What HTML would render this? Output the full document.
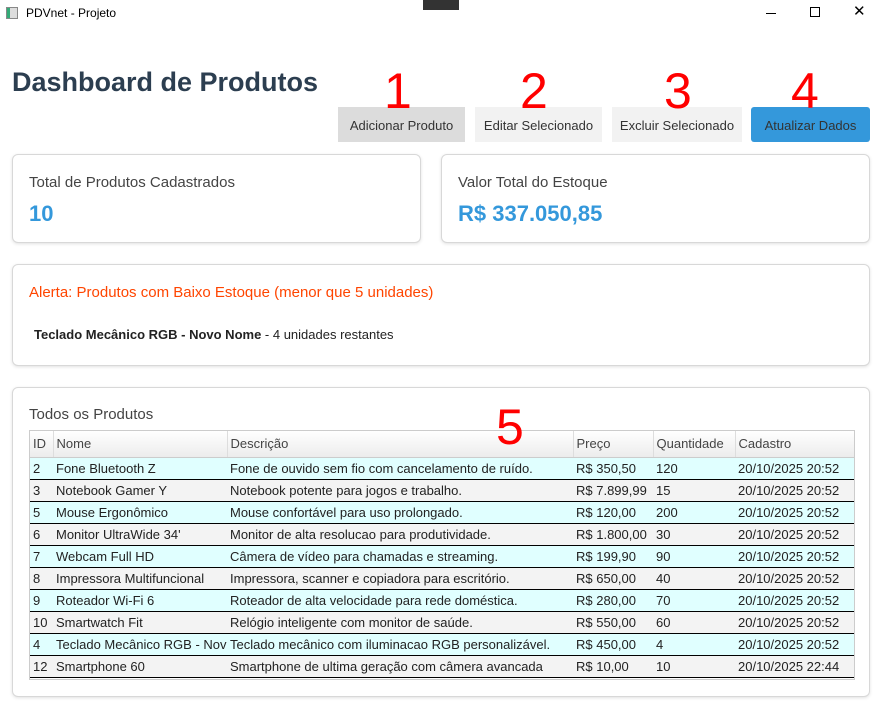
<!DOCTYPE html>
<html><head><meta charset="utf-8"><style>
*{box-sizing:border-box;margin:0;padding:0}
body{width:882px;height:709px;background:#fff;font-family:"Liberation Sans",sans-serif;position:relative;overflow:hidden;color:#222}
.abs{position:absolute}
.card{position:absolute;border:1px solid #d8d8d8;border-radius:6px;background:#fff;box-shadow:0 1px 3px rgba(0,0,0,.12)}
.btn{position:absolute;top:107px;height:35px;font-size:13px;line-height:37px;text-align:center;color:#333}
.num{position:absolute;color:#f00;font-size:50px;font-family:"Liberation Sans",sans-serif;line-height:50px;z-index:5}
table{border-collapse:collapse;font-size:13px;table-layout:fixed}
td,th{padding:0 3px;white-space:nowrap;overflow:hidden;text-align:left;font-weight:normal;height:22px}
th{height:26px;background:linear-gradient(#fff,#ececec);color:#444;border-right:1px solid #ddd;border-bottom:1px solid #ccc}
tr.r td{border-bottom:1px solid #000}
tr.c td{background:#e0ffff}
tr.g td{background:#f3f3f3}
</style></head><body>
<div class="abs" style="left:6px;top:7px;width:12px;height:12px;background:linear-gradient(90deg,#3a7 0 30%,#ddd 30%);border:1px solid #888"></div>
<div class="abs" style="left:26px;top:6px;font-size:12px;color:#000">PDVnet - Projeto</div>
<div class="abs" style="left:423px;top:0;width:36px;height:10px;background:#333"></div>
<div class="abs" style="left:766px;top:13px;width:10px;height:1px;background:#000"></div>
<div class="abs" style="left:810px;top:7px;width:10px;height:10px;border:1px solid #000"></div>
<div class="abs" style="left:853px;top:2px;font-size:15px;color:#000">✕</div>
<div class="abs" style="left:12px;top:67px;font-size:27px;font-weight:bold;color:#2c3e50">Dashboard de Produtos</div>
<div class="btn" style="left:338px;width:127px;background:#dcdcdc">Adicionar Produto</div>
<div class="btn" style="left:475px;width:127px;background:#f2f2f2">Editar Selecionado</div>
<div class="btn" style="left:612px;width:130px;background:#f2f2f2">Excluir Selecionado</div>
<div class="btn" style="left:751px;width:119px;background:#3498db;border-radius:3px">Atualizar Dados</div>
<div class="num" style="left:384px;top:66px">1</div>
<div class="num" style="left:520px;top:66px">2</div>
<div class="num" style="left:664px;top:66px">3</div>
<div class="num" style="left:791px;top:66px">4</div>
<div class="num" style="left:496px;top:402px">5</div>
<div class="card" style="left:12px;top:154px;width:409px;height:89px">
<div class="abs" style="left:16px;top:19px;font-size:15px;color:#444">Total de Produtos Cadastrados</div>
<div class="abs" style="left:16px;top:46px;font-size:22px;font-weight:bold;color:#3498db">10</div></div>
<div class="card" style="left:441px;top:154px;width:429px;height:89px">
<div class="abs" style="left:16px;top:19px;font-size:15px;color:#444">Valor Total do Estoque</div>
<div class="abs" style="left:16px;top:46px;font-size:22px;font-weight:bold;color:#3498db">R$ 337.050,85</div></div>
<div class="card" style="left:12px;top:264px;width:858px;height:102px">
<div class="abs" style="left:16px;top:19px;font-size:15px;color:#ff4500">Alerta: Produtos com Baixo Estoque (menor que 5 unidades)</div>
<div class="abs" style="left:21px;top:62px;font-size:13px;color:#222"><b>Teclado Mecânico RGB - Novo Nome</b> - 4 unidades restantes</div></div>
<div class="card" style="left:12px;top:387px;width:858px;height:310px">
<div class="abs" style="left:16px;top:18px;font-size:15px;color:#444">Todos os Produtos</div>
<div class="abs" style="left:16px;top:42px;width:826px;height:250px;border:1px solid #ccc;overflow:hidden">
<table style="width:826px"><colgroup><col style="width:23px"><col style="width:174px"><col style="width:346px"><col style="width:80px"><col style="width:82px"><col style="width:121px"></colgroup>
<tr><th>ID</th><th>Nome</th><th>Descrição</th><th>Preço</th><th>Quantidade</th><th>Cadastro</th></tr>
<tr class="r c"><td>2</td><td>Fone Bluetooth Z</td><td>Fone de ouvido sem fio com cancelamento de ruído.</td><td>R$ 350,50</td><td>120</td><td>20/10/2025 20:52</td></tr>
<tr class="r g"><td>3</td><td>Notebook Gamer Y</td><td>Notebook potente para jogos e trabalho.</td><td>R$ 7.899,99</td><td>15</td><td>20/10/2025 20:52</td></tr>
<tr class="r c"><td>5</td><td>Mouse Ergonômico</td><td>Mouse confortável para uso prolongado.</td><td>R$ 120,00</td><td>200</td><td>20/10/2025 20:52</td></tr>
<tr class="r g"><td>6</td><td>Monitor UltraWide 34'</td><td>Monitor de alta resolucao para produtividade.</td><td>R$ 1.800,00</td><td>30</td><td>20/10/2025 20:52</td></tr>
<tr class="r c"><td>7</td><td>Webcam Full HD</td><td>Câmera de vídeo para chamadas e streaming.</td><td>R$ 199,90</td><td>90</td><td>20/10/2025 20:52</td></tr>
<tr class="r g"><td>8</td><td>Impressora Multifuncional</td><td>Impressora, scanner e copiadora para escritório.</td><td>R$ 650,00</td><td>40</td><td>20/10/2025 20:52</td></tr>
<tr class="r c"><td>9</td><td>Roteador Wi-Fi 6</td><td>Roteador de alta velocidade para rede doméstica.</td><td>R$ 280,00</td><td>70</td><td>20/10/2025 20:52</td></tr>
<tr class="r g"><td>10</td><td>Smartwatch Fit</td><td>Relógio inteligente com monitor de saúde.</td><td>R$ 550,00</td><td>60</td><td>20/10/2025 20:52</td></tr>
<tr class="r c"><td>4</td><td>Teclado Mecânico RGB - Novo</td><td>Teclado mecânico com iluminacao RGB personalizável.</td><td>R$ 450,00</td><td>4</td><td>20/10/2025 20:52</td></tr>
<tr class="r g"><td>12</td><td>Smartphone 60</td><td>Smartphone de ultima geração com câmera avancada</td><td>R$ 10,00</td><td>10</td><td>20/10/2025 22:44</td></tr>
</table></div></div>
</body></html>
